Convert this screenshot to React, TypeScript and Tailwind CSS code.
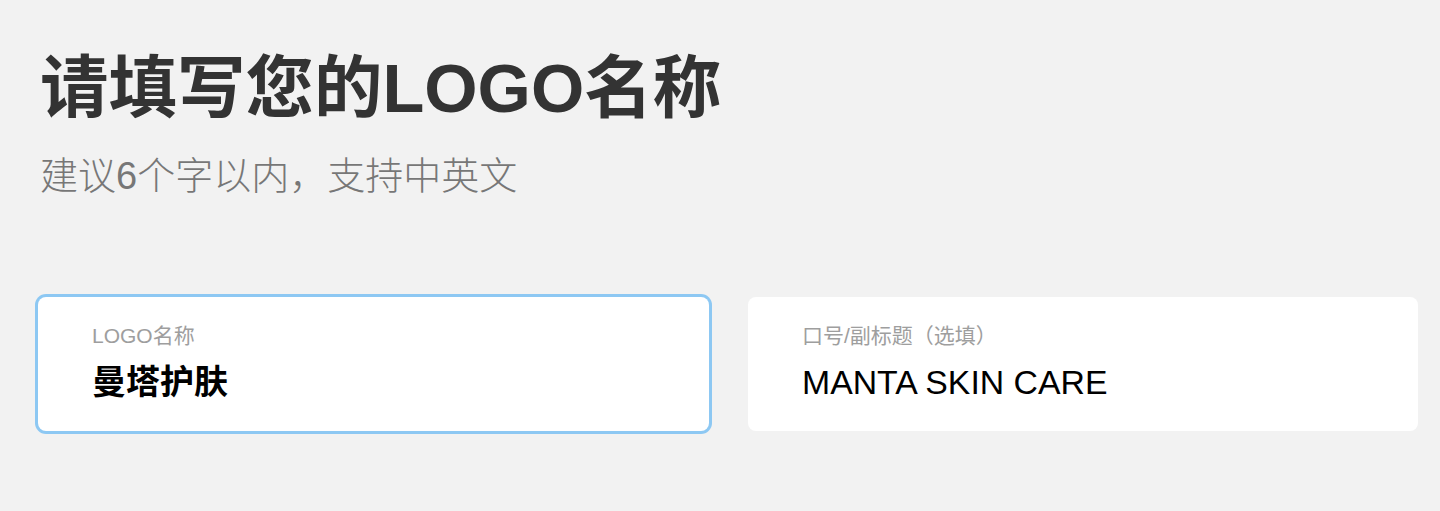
import React from "react";

const FONT = { fontFamily: '"Liberation Sans", "Noto Sans CJK SC", sans-serif' };

export default function App() {
  return (
    <div className="w-[1440px] h-[511px] bg-[#f2f2f2] overflow-hidden" style={FONT}>
      <div className="pl-[40px] pt-[55px]">
        <h1 className="text-[68.5px] leading-[68px] font-bold text-[#333333] whitespace-nowrap">
          请填写您的LOGO名称
        </h1>
        <p className="mt-[34px] text-[38px] leading-[38px] font-light text-[#777777] whitespace-nowrap">
          建议6个字以内，支持中英文
        </p>
      </div>
      <div className="flex gap-[39px] pl-[38px] mt-[102px]">
        <div className="w-[671px] h-[134px] bg-white rounded-[8px] ring-[3px] ring-[#8dc8f3] pl-[54px] pt-[28px]">
          <div className="text-[21px] leading-[21px] text-[#9e9e9e] whitespace-nowrap">LOGO名称</div>
          <div className="mt-[19px] text-[34px] leading-[34px] font-bold text-black whitespace-nowrap">曼塔护肤</div>
        </div>
        <div className="w-[670px] h-[134px] bg-white rounded-[8px] pl-[54px] pt-[28px]">
          <div className="text-[21px] leading-[21px] text-[#9e9e9e] whitespace-nowrap">口号/副标题（选填）</div>
          <div className="mt-[19px] text-[33.8px] leading-[34px] text-black whitespace-nowrap">MANTA SKIN CARE</div>
        </div>
      </div>
    </div>
  );
}
